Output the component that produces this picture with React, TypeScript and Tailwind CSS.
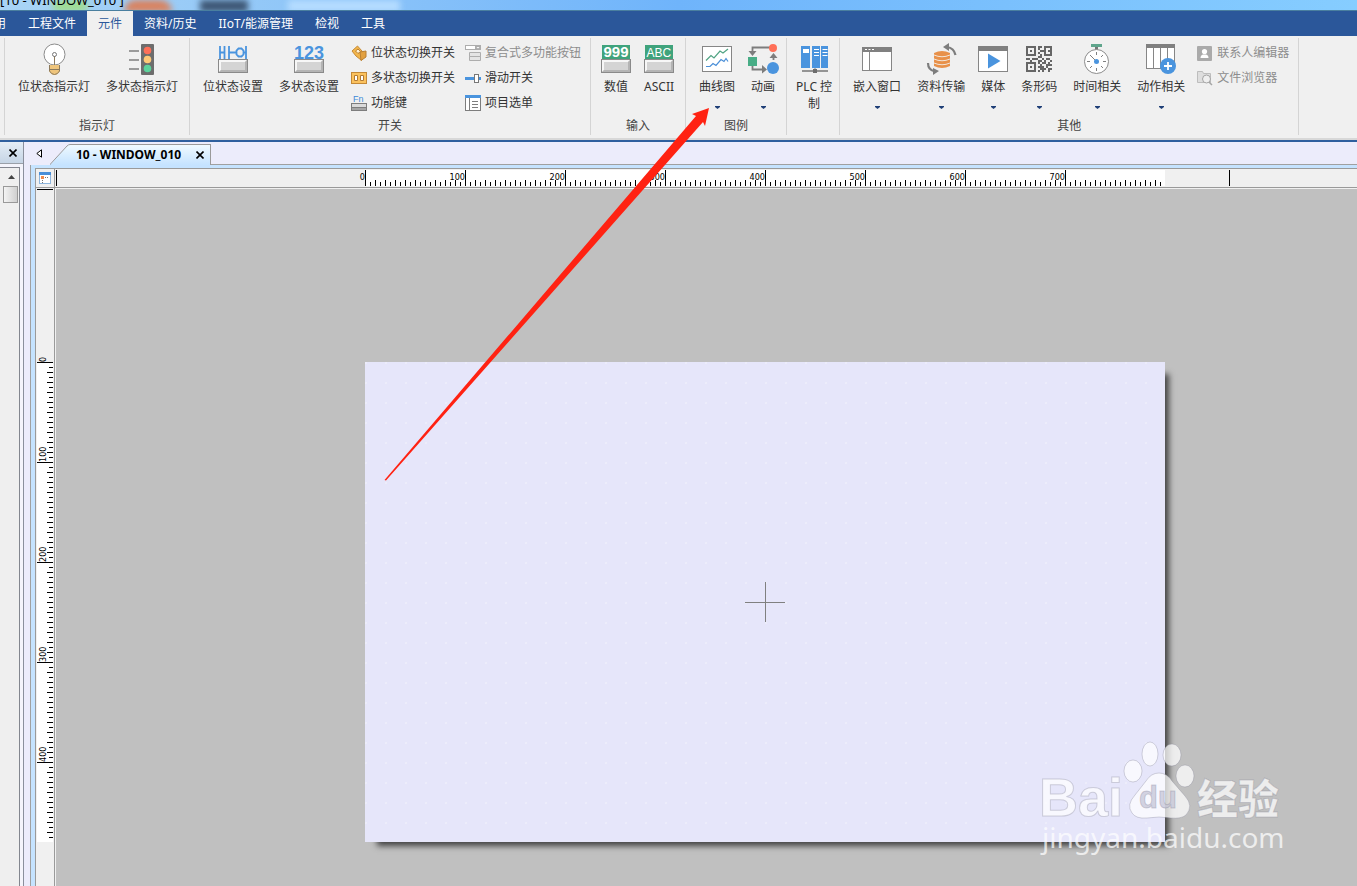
import { ReactNode } from 'react';

const FONT = "font-['Noto_Sans','Noto_Sans_CJK_SC',sans-serif]";

interface ChildrenProps {
  children: ReactNode;
};

const Icon = ({ children }: ChildrenProps) => (
  <svg viewBox="0 0 32 32" className="-mx-1 h-8 w-8 shrink-0" fill="none" aria-hidden="true">
    {children}
  </svg>
);

const SmallIcon = ({ children }: ChildrenProps) => (
  <svg viewBox="0 0 16 16" className="h-4 w-4 shrink-0" fill="none" aria-hidden="true">
    {children}
  </svg>
);

// grey bevelled key used by the switch and input icons
const Key = () => (
  <>
    <rect x="1.5" y="16.5" width="29" height="13" fill="#d4d4d4" stroke="#8a8a8a" />
    <path d="M2 29V17h28l-2 2H4v8z" fill="#f7f7f7" />
    <path d="M30 17v12H2l2-2h24v-8z" fill="#b4b4b4" />
  </>
);

const BulbIcon = () => (
  <Icon>
    <circle cx="16.5" cy="11.5" r="10.5" fill="#fff" stroke="#8c8c8c" />
    <path d="M11 22h11v6q-2 4-5.500 4T11 28z" fill="#efc57c" />
    <path d="M11.500 22v6q2 3.500 5 3.500t5-3.500v-6M11 26.500h11M16.500 13v9" stroke="#8c7a5c" />
    <circle cx="16.500" cy="11.500" r="2" stroke="#777" />
  </Icon>
);

const TrafficIcon = () => (
  <Icon>
    <rect x="15" y="1" width="13" height="31" rx="1" fill="#6d6d6d" />
    <circle cx="21.500" cy="7.500" r="3.800" fill="#ff7058" />
    <circle cx="21.500" cy="16.500" r="3.800" fill="#ffc977" />
    <circle cx="21.500" cy="25.500" r="3.800" fill="#5cd39c" />
    <path d="M3 8h10M3 17h10M3 26h10" stroke="#7d7d7d" strokeWidth="1.600" />
  </Icon>
);

const BitSetIcon = () => (
  <Icon>
    <Key />
    <path
      d="M3 3v13M7.500 3v13M12 3v13M29 3v13M3 9.500h4M12 9.500h7M26 9.500h3M21.500 5.500h3l2 2v4l-2 2h-3l-2-2v-4z"
      stroke="#4a94de"
      strokeWidth="1.800"
    />
  </Icon>
);

const WordSetIcon = () => (
  <Icon>
    <text x="1" y="16" fontSize="18" fontWeight="700" fill="#4a94de" className="font-['Liberation_Sans',sans-serif]">123</text>
    <Key />
  </Icon>
);

const NumericIcon = () => (
  <Icon>
    <rect x="2" y="2" width="28" height="14" fill="#3fa37c" />
    <text x="3.500" y="14" fontSize="15" fontWeight="700" fill="#fff" className="font-['Liberation_Sans',sans-serif]">999</text>
    <Key />
  </Icon>
);

const AsciiIcon = () => (
  <Icon>
    <rect x="2" y="2" width="28" height="14" fill="#3fa37c" />
    <text x="3.500" y="14" fontSize="12" fill="#fff" className="font-['Liberation_Sans',sans-serif]">ABC</text>
    <Key />
  </Icon>
);

const TrendIcon = () => (
  <Icon>
    <rect x="1.500" y="3.500" width="29" height="25" fill="#fff" stroke="#868686" />
    <path d="M5 17.500l5-5 3 2.500 6-7 3 2 5-4" stroke="#4fa382" strokeWidth="1.200" />
    <path d="M5 23.500h4l3-3 3 2 5-6 3 2 2-3 2 3" stroke="#4a8fd8" strokeWidth="1.200" />
  </Icon>
);

const AnimationIcon = () => (
  <Icon>
    <path d="M24 4.500H5.500V10M5.500 23v3.500H15M26.500 17v-3" stroke="#7d7d7d" strokeWidth="1.800" />
    <path d="M1.500 8h8l-4 5zM15 22l5 4.500-5 4zM22.500 15l4-5 4 5z" fill="#7d7d7d" />
    <rect x="1" y="14" width="9" height="9" fill="#48ad86" />
    <circle cx="26" cy="5" r="4" fill="#ff7058" />
    <circle cx="26" cy="25" r="6" fill="#4a94de" />
  </Icon>
);

const PlcIcon = () => (
  <Icon>
    <path d="M3 3h9v22H3zM14 3h8v22h-8zM23 3h7v22h-7z" fill="#4a94de" />
    <path d="M5 6h6v4H5z" fill="#fff" />
    <path d="M16 6.500h5M16 9.500h5M16 12.500h5M24.500 6.500h5M24.500 9.500h5M24.500 12.500h5" stroke="#fff" />
    <path d="M4 28h26" stroke="#7d7d7d" strokeWidth="1.600" />
    <path d="M17 25v2" stroke="#7d7d7d" />
    <rect x="15" y="26" width="4" height="4" fill="#6d6d6d" />
  </Icon>
);

const EmbedIcon = () => (
  <Icon>
    <rect x="1.500" y="4.500" width="29" height="23" fill="#fff" stroke="#868686" />
    <path d="M1 4h30v5H1z" fill="#808080" />
    <path d="M4 6.500h2M7.500 6.500h2M11 6.500h2" stroke="#fff" />
    <path d="M8.500 9v18" stroke="#868686" />
  </Icon>
);

const TransferIcon = () => (
  <Icon>
    <path d="M9 10q8-4 16 0v13q-8 4-16 0z" fill="#e8914a" />
    <path d="M9 12q8 3.500 16 0M9 16q8 3.500 16 0M9 20q8 3.500 16 0" stroke="#f3e6da" />
    <path d="M22 4q7 1 8.500 8M3 20q0 7 7 8.500" stroke="#7d7d7d" strokeWidth="2.200" />
    <path d="M18 4l6-4v8zM14 28l-6 4v-7z" fill="#7d7d7d" />
  </Icon>
);

const MediaIcon = () => (
  <Icon>
    <rect x="1.500" y="3.500" width="29" height="25" fill="#fff" stroke="#868686" />
    <path d="M1 3h30v5H1z" fill="#808080" />
    <path d="M11 10.500L23.500 18 11 25.500z" fill="#4a94de" />
  </Icon>
);

const QR_ROWS = [
  '1111101101111',
  '1000101001001',
  '1010100111011',
  '1000101001001',
  '1111100101111',
  '0000001100000',
  '1101110010110',
  '0010001101001',
  '1111101011010',
  '1000100100111',
  '1010101110100',
  '1000100111011',
  '1111101010010',
];

const QrIcon = () => (
  <Icon>
    {QR_ROWS.map((row, y) =>
      row.split('').map((bit, x) =>
        bit === '1' ? (
          <rect key={`${x}-${y}`} x={3 + x * 2} y={3 + y * 2} width="2" height="2" fill="#666" />
        ) : null
      )
    )}
  </Icon>
);

const StopwatchIcon = () => (
  <Icon>
    <path d="M10 1h11v3H10z" fill="#5fa58c" />
    <path d="M14 4h3v3h-3z" fill="#777" />
    <circle cx="15.500" cy="18.500" r="12" fill="#fff" stroke="#8c8c8c" />
    <path
      d="M15.500 9v3M15.500 25v3M6 18.500h3M22 18.500h3M22 12l-2 2M9 25l2-2M22 25l-2-2M9 12l6 6"
      stroke="#808080"
    />
    <circle cx="15.500" cy="18.500" r="2.500" fill="#4a94de" />
  </Icon>
);

const ActionIcon = () => (
  <Icon>
    <rect x="1.500" y="1.500" width="28" height="24" fill="#fff" stroke="#868686" />
    <path d="M1 1h29v4H1z" fill="#808080" />
    <path d="M8.500 5v20M15.500 5v20M22.500 5v20" stroke="#868686" />
    <circle cx="23" cy="23" r="8" fill="#4a94de" />
    <path d="M23 19v8M19 23h8" stroke="#fff" strokeWidth="1.800" />
  </Icon>
);

const BitSwitchIcon = () => (
  <SmallIcon>
    <path d="M1 6l5.500-5L11 6v9h-1L5 11z" fill="#f3b64b" stroke="#c58a37" />
    <path d="M9 7l6-1v6l-5 3.500z" fill="#e2a03f" stroke="#b97f32" />
    <path d="M4.500 6l2.500-2 2.500 2.500L7 8.500z" fill="#fff0d0" stroke="#b97f32" />
  </SmallIcon>
);

const WordSwitchIcon = () => (
  <SmallIcon>
    <rect x=".5" y="2.500" width="15" height="11" fill="#fbc25e" stroke="#c58a37" />
    <path d="M3.500 5.500h3v5h-3zM9.500 5.500h3v5h-3z" fill="#fff" stroke="#b17a34" />
  </SmallIcon>
);

const FunctionKeyIcon = () => (
  <SmallIcon>
    <text x="2" y="7" fontSize="9" fill="#3f8ad8" className="font-['Liberation_Sans',sans-serif]">Fn</text>
    <rect x=".5" y="8.500" width="15" height="7" fill="#dadada" stroke="#7d7d7d" />
    <path d="M1 13h14v2H1z" fill="#a5a5a5" />
    <path d="M0 12.500h16" stroke="#7d7d7d" />
  </SmallIcon>
);

const ComboIcon = () => (
  <SmallIcon>
    <rect x=".5" y=".5" width="15" height="4" fill="#fff" stroke="#adadad" />
    <path d="M10 0h6v5h-6z" fill="#adadad" />
    <path d="M11.500 2h3L13 3.500z" fill="#fff" />
    <path d="M4.500 7.500h11v4h-11zM4.500 11.500h11v4h-11z" fill="#e4e4e4" stroke="#adadad" />
  </SmallIcon>
);

const SliderIcon = () => (
  <SmallIcon>
    <path d="M0 7h9v3H0zM13 7h3v3h-3z" fill="#4a94de" />
    <rect x="9.500" y="4.500" width="4" height="8" fill="#fff" stroke="#777" />
  </SmallIcon>
);

const OptionIcon = () => (
  <SmallIcon>
    <rect x=".5" y=".5" width="15" height="15" fill="#fff" stroke="#7d7d7d" />
    <path d="M0 0h16v3H0z" fill="#4a94de" />
    <path d="M4.500 3v12M7 6.500h6M7 9.500h6M7 12.500h6" stroke="#7d7d7d" />
  </SmallIcon>
);

const ContactIcon = () => (
  <SmallIcon>
    <rect x="0" y="1" width="15" height="15" rx="1" fill="#aaa" />
    <circle cx="7.500" cy="6.500" r="2.600" fill="#fff" />
    <path d="M3.500 13q0-3 2.500-3.500h3q2.500.5 2.500 3.500z" fill="#fff" />
  </SmallIcon>
);

const FolderIcon = () => (
  <SmallIcon>
    <path d="M.5 12.500v-11h5l1 2h7v9z" fill="#dedede" stroke="#bdbdbd" />
    <circle cx="9.500" cy="9" r="4" fill="#efefef" stroke="#a5a5a5" />
    <path d="M12 12l3 3" stroke="#a5a5a5" strokeWidth="1.500" />
  </SmallIcon>
);

interface RibbonButtonProps {
  text: string;
  icon: ReactNode;
  hasMenu?: boolean;
  isCompact?: boolean;
};

const RibbonButton = ({ text, icon, hasMenu = false, isCompact = false }: RibbonButtonProps) => (
  <button
    type="button"
    className={`flex h-20 flex-col items-center text-center leading-[17px] ${isCompact ? 'px-1' : 'px-2'}`}
  >
    {icon}
    <span className="mt-[3px] whitespace-pre">{text}</span>
    {hasMenu && (
      <svg viewBox="0 0 5 3" className="mt-[11px] h-[3px] w-[5px]" aria-hidden="true">
        <path d="M0 0h5v1L2.500 3 0 1z" fill="#1f3f77" />
      </svg>
    )}
  </button>
);

interface ListButtonProps {
  text: string;
  icon: ReactNode;
  disabled?: boolean;
};

const ListButton = ({ text, icon, disabled = false }: ListButtonProps) => (
  <button
    type="button"
    disabled={disabled}
    className="flex h-[25px] items-center gap-1 whitespace-nowrap disabled:text-[#8d8d8d]"
  >
    {icon}
    {text}
  </button>
);

interface GroupProps {
  label?: string;
  children: ReactNode;
};

const Group = ({ label, children }: GroupProps) => (
  <section className="flex shrink-0 flex-col border-r border-[#d4d4d4]">
    <div className="flex h-20 pl-[5px] pr-[3px] pt-[5px]">{children}</div>
    <h2 className="text-center leading-4 text-[#444]">{label}</h2>
  </section>
);

const TABS = ['用', '工程文件', '元件', '资料/历史', 'IIoT/能源管理', '检视', '工具'];

const Ribbon = () => (
  <header className="shrink-0 text-xs text-[#333]">
    <div className="relative h-[11px] overflow-hidden border-b border-[#4a7f9f] bg-linear-to-r from-[#a9d4f5] via-[#6fb4fb] to-[#86cdff]">
      <div className="absolute inset-0 flex blur-[3px]">
        <span className="ml-[52px] h-3 w-9 rounded-full bg-[#9fdc92]" />
        <span className="ml-9 h-3 w-12 rounded-t-full bg-[#d9825f]" />
        <span className="ml-7 h-3 w-12 bg-[#3d5674]" />
        <span className="ml-10 h-3 w-28 bg-[#b5dcff]" />
      </div>
      <h1 className="relative -mt-2 whitespace-nowrap text-[13px] leading-4 text-black">[10 - WINDOW_010 ]</h1>
    </div>
    <nav className="flex h-[25px] overflow-hidden bg-[#2b579a] text-white">
      {TABS.map((tab, index) => (
        <button
          key={tab}
          type="button"
          className={
            index === 2
              ? 'bg-[#f0f0f0] px-[11px] text-[#2b579a]'
              : index === 0
                ? '-ml-[17px] px-[11px]'
                : 'px-[11px]'
          }
        >
          {tab}
        </button>
      ))}
    </nav>
    <div className="flex h-[106px] overflow-hidden border-b-2 border-[#2f5f9e] bg-[#f0f0f0]">
      <div className="flex w-full border-b-2 border-[#d8d8d8] pb-[3px] pt-[2px]">
        <div className="w-[5px] shrink-0 border-r border-[#d4d4d4]" />
        <Group label="指示灯">
          <RibbonButton text="位状态指示灯" icon={<BulbIcon />} />
          <RibbonButton text="多状态指示灯" icon={<TrafficIcon />} />
        </Group>
        <Group label="开关">
          <RibbonButton text="位状态设置" icon={<BitSetIcon />} />
          <RibbonButton text="多状态设置" icon={<WordSetIcon />} />
          <div className="-mt-[3px] grid auto-rows-min grid-cols-[104px_116px] gap-x-[10px] pl-1 pr-[6px]">
            <ListButton text="位状态切换开关" icon={<BitSwitchIcon />} />
            <ListButton text="复合式多功能按钮" icon={<ComboIcon />} disabled />
            <ListButton text="多状态切换开关" icon={<WordSwitchIcon />} />
            <ListButton text="滑动开关" icon={<SliderIcon />} />
            <ListButton text="功能键" icon={<FunctionKeyIcon />} />
            <ListButton text="项目选单" icon={<OptionIcon />} />
          </div>
        </Group>
        <Group label="输入">
          <RibbonButton text="数值" icon={<NumericIcon />} />
          <RibbonButton text="ASCII" icon={<AsciiIcon />} />
        </Group>
        <Group label="图例">
          <RibbonButton text="曲线图" icon={<TrendIcon />} hasMenu />
          <RibbonButton text="动画" icon={<AnimationIcon />} hasMenu />
        </Group>
        <Group>
          <RibbonButton text={'PLC 控\n制'} icon={<PlcIcon />} isCompact />
        </Group>
        <Group label="其他">
          <RibbonButton text="嵌入窗口" icon={<EmbedIcon />} hasMenu />
          <RibbonButton text="资料传输" icon={<TransferIcon />} hasMenu />
          <RibbonButton text="媒体" icon={<MediaIcon />} hasMenu />
          <RibbonButton text="条形码" icon={<QrIcon />} hasMenu />
          <RibbonButton text="时间相关" icon={<StopwatchIcon />} hasMenu />
          <RibbonButton text="动作相关" icon={<ActionIcon />} hasMenu />
          <div className="-mt-[3px] flex flex-col pl-1 pr-[6px]">
            <ListButton text="联系人编辑器" icon={<ContactIcon />} disabled />
            <ListButton text="文件浏览器" icon={<FolderIcon />} disabled />
          </div>
        </Group>
      </div>
    </div>
  </header>
);

const CloseMark = () => (
  <svg viewBox="0 0 8 8" className="h-2 w-2" aria-hidden="true">
    <path d="M.5.5l7 7M7.500.5l-7 7" stroke="#000" strokeWidth="1.600" />
  </svg>
);

const SidePanel = () => (
  <aside className="flex w-6 shrink-0 flex-col border-r border-[#8a8f9c] bg-[#f4f4fb]">
    <div className="flex h-[22px] items-center justify-end border-b border-[#9aa0a8] bg-linear-to-b from-[#e4edf6] to-[#c6d5e5] pr-[6px]">
      <button type="button" aria-label="关闭面板"><CloseMark /></button>
    </div>
    <div className="mr-[3px] mt-[3px] flex flex-1 flex-col border-r border-t border-[#83868f] bg-[#efefef] pl-[3px]">
      <button type="button" aria-label="向上滚动" className="flex h-[18px] w-4 items-center justify-center">
        <svg viewBox="0 0 7 4" className="h-1 w-[7px]" aria-hidden="true">
          <path d="M0 4l3.500-4L7 4z" fill="#444" />
        </svg>
      </button>
      <div className="h-[17px] w-[15px] border border-[#999] bg-linear-to-r from-[#f4f4f4] to-[#cfcfcf]" />
    </div>
  </aside>
);

const WindowTab = () => (
  <div className="flex h-[23px] shrink-0 bg-[#ececfb]">
    <button type="button" aria-label="上一个窗口" className="flex w-[26px] items-center pl-3">
      <svg viewBox="0 0 6 9" className="h-[9px] w-[6px]" aria-hidden="true">
        <path d="M5.500.8v7.400L.8 4.500z" fill="#fff" stroke="#000" />
      </svg>
    </button>
    <div className="flex flex-1 border-b border-[#a0a0a0] pt-[2px]">
      <svg viewBox="0 0 20 21" className="-mb-px h-[21px] w-5" aria-hidden="true">
        <defs>
          <linearGradient id="tab" x1="0" y1="0" x2="0" y2="1">
            <stop offset="0" stopColor="#f0faff" />
            <stop offset="1" stopColor="#c5e3ff" />
          </linearGradient>
        </defs>
        <path d="M0 21L17 2q2-2 3-2v21z" fill="url(#tab)" />
        <path d="M0 20.500L17 2q1.500-1.500 3-1.500" fill="none" stroke="#9a9a9a" />
      </svg>
      <div className="-mb-px flex items-center border-r border-t border-[#9a9a9a] bg-linear-to-b from-[#f0faff] to-[#c5e3ff] pl-[6px] pr-[6px]">
        <a href="#window-010" className="whitespace-nowrap text-xs font-bold leading-4 text-black">10 - WINDOW_010</a>
        <button type="button" aria-label="关闭窗口" className="ml-[15px]"><CloseMark /></button>
      </div>
    </div>
  </div>
);

const MINOR = 5;
const range = (length: number) => Array.from({ length }, (_, i) => i);

const HorizontalRuler = () => (
  <div className="h-[18px] flex-1 overflow-hidden bg-[#f0f0f0]">
    <svg width="1180" height="18" className="max-w-none" shapeRendering="crispEdges">
      <rect x="310" y="1" width="800" height="16" fill="#fff" />
      <path d="M1.500 1v16M1174.500 1v16" stroke="#000" />
      {range(160).map((i) => (
        <rect
          key={i}
          x={310 + i * MINOR}
          y={i % 20 === 0 ? 1 : i % 2 ? 13 : 11}
          width="1"
          height={i % 20 === 0 ? 16 : i % 2 ? 4 : 6}
        />
      ))}
      {range(8).map((i) => (
        <text
          key={i}
          x={310 + i * 100}
          y="11"
          fontSize="9"
          textAnchor="end"
          className="font-['DejaVu_Sans_Condensed','DejaVu_Sans',sans-serif]"
        >
          {i * 100}
        </text>
      ))}
    </svg>
  </div>
);

const VerticalRuler = () => (
  <div className="w-[18px] shrink-0 overflow-hidden bg-[#f0f0f0]">
    <svg width="18" height="660" className="max-w-none" shapeRendering="crispEdges">
      <rect x="1" y="174" width="16" height="480" fill="#fff" />
      <rect x="1" y="1" width="16" height="1" />
      {range(96).map((i) => (
        <rect
          key={i}
          x={i % 20 === 0 ? 1 : i % 2 ? 13 : 11}
          y={174 + i * MINOR}
          width={i % 20 === 0 ? 16 : i % 2 ? 4 : 6}
          height="1"
        />
      ))}
      {range(5).map((i) => (
        <text
          key={i}
          transform={`translate(10 ${174 + i * 100}) rotate(-90)`}
          fontSize="9"
          className="font-['DejaVu_Sans_Condensed','DejaVu_Sans',sans-serif]"
        >
          {i * 100}
        </text>
      ))}
    </svg>
  </div>
);

const Watermark = () => (
  <svg
    viewBox="0 0 250 120"
    className="absolute bottom-[28px] right-[71px] h-[120px] w-[250px]"
    fill="#fff"
    fillOpacity=".72"
    stroke="#77778c"
    strokeOpacity=".3"
    aria-hidden="true"
  >
    <text x="3" y="78" fontSize="54" fontWeight="700" className="font-['Liberation_Sans',sans-serif]">Bai</text>
    <ellipse cx="97" cy="33" rx="9" ry="11" />
    <ellipse cx="114" cy="16" rx="8" ry="12" />
    <ellipse cx="136" cy="17" rx="9" ry="11" />
    <ellipse cx="149" cy="38" rx="9" ry="11" />
    <path d="M123 35q8 0 13 8l13 15q9 10 1 19-5 4-15 3-12-2-24 0-11 1-15-5-6-8 3-18l11-14q5-8 13-8z" />
    <text
      x="103"
      y="70"
      fontSize="31"
      fontWeight="700"
      fill="#c4c4d6"
      className="font-['Liberation_Sans',sans-serif]"
    >
      du
    </text>
    <text x="161" y="76" fontSize="41" fontWeight="900" className="font-['Noto_Sans_CJK_SC',sans-serif]">经验</text>
    <text x="6" y="110" fontSize="28" stroke="none" className="font-['Noto_Sans',sans-serif]">jingyan.baidu.com</text>
  </svg>
);

const DesignArea = () => (
  <div className="relative flex-1 overflow-hidden border-l border-t border-[#f0f0f0] bg-[#c0c0c0] pl-[309px] pt-[173px]">
    <div className="flex h-[480px] w-[800px] items-center justify-center bg-[#e6e6fa] bg-[radial-gradient(circle_at_1px_1px,#fff,transparent_1px)] bg-size-[20px_20px] shadow-[8px_8px_6px_-4px_#444]">
      <svg viewBox="0 0 40 40" className="h-10 w-10" shapeRendering="crispEdges" aria-hidden="true">
        <path d="M20.500 0v40M0 20.500h40" stroke="#808080" />
      </svg>
    </div>
    <Watermark />
  </div>
);

export default function App() {
  return (
    <div className={`relative flex h-screen flex-col overflow-hidden bg-[#ececfb] ${FONT}`}>
      <Ribbon />
      <div className="flex min-h-0 flex-1">
        <SidePanel />
        <main className="flex min-w-0 flex-1 flex-col">
          <WindowTab />
          <div className="ml-[6px] flex min-h-0 flex-1 flex-col border-l border-[#a0a0a0] bg-[#c5e3ff] pl-1 pt-[3px]">
            <div className="flex min-h-0 flex-1 flex-col border-l border-t border-[#9a9a9a]">
              <div className="flex h-[19px] shrink-0 border-b border-[#9a9a9a] bg-[#f0f0f0]">
                <button
                  type="button"
                  aria-label="窗口属性"
                  className="flex w-[19px] items-center justify-center border-r border-[#9a9a9a]"
                >
                  <svg viewBox="0 0 12 12" className="h-3 w-3" aria-hidden="true">
                    <rect x=".5" y=".5" width="11" height="11" fill="#fff" stroke="#8fb6dd" />
                    <path d="M0 0h12v3H0z" fill="#4a8fd8" />
                    <path d="M3.500 6v5M4 5.500h5" stroke="#777" strokeDasharray="1 1" />
                    <rect x="2" y="4" width="3" height="3" fill="#ef8a4c" />
                  </svg>
                </button>
                <HorizontalRuler />
              </div>
              <div className="flex min-h-0 flex-1">
                <VerticalRuler />
                <div className="flex min-w-0 flex-1 border-l border-[#9a9a9a]">
                  <DesignArea />
                </div>
              </div>
            </div>
          </div>
        </main>
      </div>
      <svg
        viewBox="0 0 340 390"
        className="pointer-events-none absolute left-[380px] top-[100px] h-[390px] w-[340px]"
        aria-hidden="true"
      >
        <path d="M4.500 380L316 16l-4-2 17-6-4 18-2-4L6 380.500z" fill="#ff2212" />
      </svg>
    </div>
  );
}
